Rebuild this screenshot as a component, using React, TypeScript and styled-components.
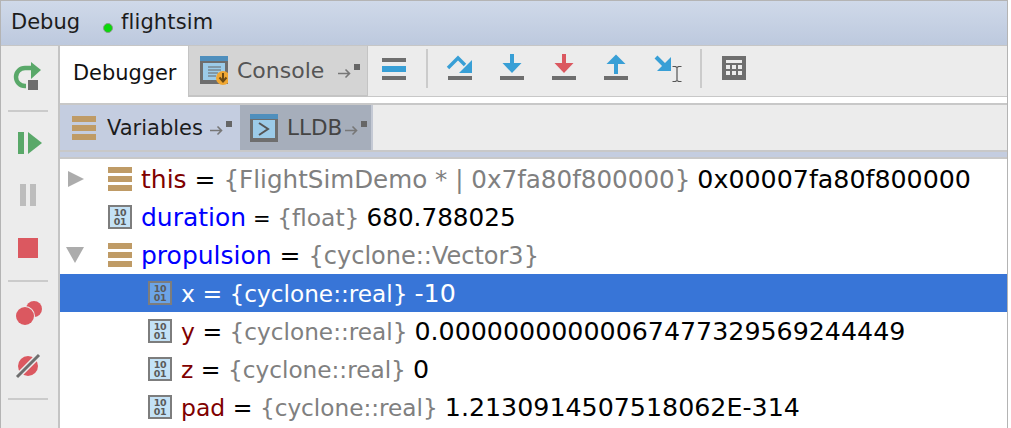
import React from "react";
import styled, { createGlobalStyle } from "styled-components";

const Global = createGlobalStyle`
  html, body { margin: 0; padding: 0; background: #fff; }
  body { font-family: "DejaVu Sans", "Open Sans", sans-serif; overflow: hidden; }
`;

const GRAY = "#6e6e6e";
const BLUE = "#389fd6";
const RED = "#db5860";
const GREEN = "#59a869";
const TAN = "#bf9b66";

const Frame = styled.div`
  width: 1008px;
  height: 428px;
  box-sizing: border-box;
  border: solid #b4b4b4;
  border-width: 1px 1px 0 1px;
  display: flex;
  flex-direction: column;
  overflow: hidden;
`;
const TitleBar = styled.div`
  height: 44px;
  flex: none;
  box-sizing: border-box;
  padding: 0 0 3px 10px;
  display: flex;
  align-items: center;
  background: linear-gradient(#cfd9e9, #bdc9de);
  font-size: 21px;
  color: #1c1c1c;
`;
const Title = styled.span`
  width: 85px;
`;
const Target = styled.span`
  letter-spacing: 0.12px;
`;
const RunDot = styled.span`
  width: 8px;
  height: 8px;
  border-radius: 50%;
  background: #0bd80b;
  border: 1px solid #8a9a8a;
  margin: 13px 8px 0 7px;
`;
const Body = styled.div`
  flex: 1;
  display: flex;
  min-height: 0;
  border-top: 1px solid #c6c6c6;
`;
const Sidebar = styled.div`
  width: 57px;
  flex: none;
  box-sizing: content-box;
  border-right: 2px solid #c4c4c4;
  background: #ececec;
  padding-top: 5px;
  display: flex;
  flex-direction: column;
`;
const SideButton = styled.svg`
  display: block;
  width: 57px;
  height: 52px;
  flex: none;
`;
const SideSep = styled.div<{ $top: number }>`
  height: 2px;
  flex: none;
  margin: ${(p) => p.$top}px 10px 5px 7px;
  background: #cbcbcb;
`;
const Main = styled.div`
  flex: 1;
  min-width: 0;
  display: flex;
  flex-direction: column;
`;
const TopRow = styled.div`
  height: 57px;
  flex: none;
  display: flex;
  align-items: flex-start;
  background: #fff;
  border-bottom: 2px solid #c8c8c8;
`;
const ActiveTab = styled.div`
  width: 126px;
  height: 57px;
  flex: none;
  box-sizing: border-box;
  padding: 0 0 4px 13px;
  display: flex;
  align-items: center;
  font-size: 20.9px;
  color: #111;
`;
const ConsoleTab = styled.div`
  margin-left: 2px;
  width: 179px;
  height: 51px;
  flex: none;
  box-sizing: border-box;
  border: solid #c4c4c4;
  border-width: 0 0 2px 1px;
  background: #d4d4d4;
  padding-left: 11px;
  display: flex;
  align-items: center;
  font-size: 22px;
  color: #555;
`;
const TabLabel = styled.span<{ $gap: number; $lead?: number }>`
  margin: 0 ${(p) => p.$gap}px 0 ${(p) => p.$lead ?? 9}px;
`;
const Toolbar = styled.div`
  flex: 1;
  height: 51px;
  box-sizing: border-box;
  background: #ececec;
  border-bottom: 1px solid #c8c8c8;
  border-left: 1px solid #c4c4c4;
  display: flex;
  align-items: flex-start;
`;
const ToolIcon = styled.svg`
  display: block;
  width: 52px;
  height: 50px;
  flex: none;
`;
const ToolSep = styled.div`
  width: 2px;
  height: 39px;
  flex: none;
  margin: 3px 6px 0;
  background: #cbcbcb;
`;
const SubRow = styled.div`
  height: 45px;
  flex: none;
  display: flex;
  background: #ececec;
  border-bottom: 2px solid #c8c8c8;
`;
const VarsTab = styled.div`
  width: 180px;
  flex: none;
  box-sizing: border-box;
  padding-left: 12px;
  background: #c4cde0;
  display: flex;
  align-items: center;
  font-size: 21px;
  color: #1c1c1c;
`;
const LldbTab = styled.div`
  width: 133px;
  flex: none;
  box-sizing: border-box;
  padding-left: 10px;
  background: #a6aebb;
  border-right: 2px solid #c4c9d4;
  display: flex;
  align-items: center;
  font-size: 21.5px;
  color: #444;
`;
const Strip = styled.div`
  height: 5px;
  flex: none;
  background: #c4cde0;
  border-bottom: 2px solid #c8c8c8;
`;
const Tree = styled.div`
  flex: 1;
  min-height: 0;
  padding-top: 1px;
  background: #fff;
`;
const Row = styled.div<{ $selected?: boolean }>`
  height: 38px;
  display: flex;
  align-items: center;
  white-space: nowrap;
  color: ${(p) => (p.$selected ? "#fff" : "#000")};
  background: ${(p) => (p.$selected ? "#3875d7" : "transparent")};
`;
const Twisty = styled.svg`
  width: 48px;
  height: 20px;
  flex: none;
`;
const Indent = styled.div`
  width: 88px;
  flex: none;
`;
const NameKind = styled.span<{ $kind: "member" | "local" | "selected"; $nested: boolean }>`
  font-size: ${(p) => (p.$nested ? 23.5 : 25)}px;
  color: ${(p) => (p.$kind === "member" ? "#7f0000" : p.$kind === "local" ? "#0000ff" : "#fff")};
`;
const Equals = styled.span<{ $size: number }>`
  font-size: ${(p) => p.$size}px;
`;
const TypeText = styled.span<{ $selected?: boolean; $size: number }>`
  font-size: ${(p) => p.$size}px;
  color: ${(p) => (p.$selected ? "#fff" : "#808080")};
`;
const ValueText = styled.span<{ $size: number }>`
  font-size: ${(p) => p.$size}px;
  margin-left: 7px;
`;
const Label = styled.span`
  margin-left: 9px;
`;
const BarsSvg = styled.svg`
  width: 24px;
  height: 24px;
  flex: none;
`;
const HexBox = styled.div<{ $selected?: boolean }>`
  width: 24px;
  height: 24px;
  flex: none;
  box-sizing: border-box;
  border: 2px solid #7d7d7d;
  background: ${(p) => (p.$selected ? "#6ca4e6" : "#c4e2f6")};
  color: #5a5a5a;
  font: bold 9.5px/8.5px "DejaVu Sans", sans-serif;
  letter-spacing: -0.3px;
  text-align: center;
  padding-top: 2px;
  overflow: hidden;
`;

const Bars = () => (
  <BarsSvg viewBox="0 0 24 24">
    <rect y="0" width="24" height="6" fill={TAN} />
    <rect y="9" width="24" height="6" fill={TAN} />
    <rect y="18" width="24" height="6" fill={TAN} />
  </BarsSvg>
);
const Hex = ({ selected }: { selected?: boolean }) => (
  <HexBox $selected={selected}>
    10
    <br />
    01
  </HexBox>
);
const Pin = () => (
  <svg width="23" height="16" viewBox="0 0 23 16" style={{ flex: "none" }}>
    <path d="M0 10.5h11M7.5 6.5l4 4-4 4" fill="none" stroke="#777" strokeWidth="1.6" />
    <rect x="16" y="1" width="6" height="6" fill="#666" />
  </svg>
);

const Sep = ToolSep;

function TreeRow(props: {
  depth: 0 | 1;
  twisty?: "closed" | "open";
  icon: "bars" | "hex";
  name: string;
  kind: "member" | "local";
  type: string;
  value?: string;
  selected?: boolean;
  eqSize?: number;
  typeSize?: number;
  valueSize?: number;
}) {
  const { depth, twisty, icon, name, kind, type, value, selected, eqSize = 23.5, typeSize = 23.2, valueSize = 25.3 } = props;
  return (
    <Row $selected={selected}>
      {depth === 1 ? (
        <Indent />
      ) : (
        <Twisty viewBox="0 0 48 20">
          {twisty === "closed" && <polygon points="8,2 24,10 8,18" fill="#acacac" />}
          {twisty === "open" && <polygon points="6,2 24,2 15,18" fill="#acacac" />}
        </Twisty>
      )}
      {icon === "bars" ? <Bars /> : <Hex selected={selected} />}
      <Label>
        <NameKind $kind={selected ? "selected" : kind} $nested={depth === 1}>
          {name}
        </NameKind>
        <Equals $size={eqSize}> = </Equals>
        <TypeText $selected={selected} $size={typeSize}>
          {type}
        </TypeText>
        {value ? <ValueText $size={valueSize}>{value}</ValueText> : null}
      </Label>
    </Row>
  );
}

export default function App() {
  return (
    <Frame>
      <Global />
      <TitleBar>
        <Title>Debug</Title>
        <RunDot />
        <Target>flightsim</Target>
      </TitleBar>
      <Body>
        <Sidebar>
          <SideButton viewBox="1 51 57 52">
            <path d="M32 68h-7a9 9 0 0 0-9 9 9 9 0 0 0 9 9h1" fill="none" stroke={GREEN} strokeWidth="4.4" />
            <polygon points="31,62 41,70 31,79" fill={GREEN} />
            <rect x="28" y="80" width="10" height="10" fill={GRAY} />
          </SideButton>
          <SideSep $top={7} />
          <SideButton viewBox="1 117 57 52">
            <rect x="18" y="132" width="6" height="22" fill={GREEN} />
            <polygon points="28,132 42,143 28,154" fill={GREEN} />
          </SideButton>
          <SideButton viewBox="1 169 57 52">
            <rect x="20" y="184" width="6" height="22" fill="#bdbdbd" />
            <rect x="30" y="184" width="6" height="22" fill="#bdbdbd" />
          </SideButton>
          <SideButton viewBox="1 221 57 52">
            <rect x="18" y="238" width="20" height="20" fill={RED} />
          </SideButton>
          <SideSep $top={7} />
          <SideButton viewBox="1 287 57 52">
            <circle cx="34" cy="309" r="8" fill={RED} />
            <circle cx="25" cy="316" r="10" fill="#ececec" />
            <circle cx="25" cy="316" r="9" fill={RED} />
          </SideButton>
          <SideButton viewBox="1 339 57 52">
            <circle cx="28" cy="366" r="10" fill={RED} />
            <path d="M17 377L39 355" stroke="#ececec" strokeWidth="6" />
            <path d="M17 377L39 355" stroke={GRAY} strokeWidth="3" />
          </SideButton>
          <SideSep $top={7} />
        </Sidebar>
        <Main>
          <TopRow>
            <ActiveTab>Debugger</ActiveTab>
            <ConsoleTab>
              <svg width="28" height="30" viewBox="200 56 28 30" style={{ flex: "none" }}>
                <rect x="200" y="56" width="28" height="28" fill={GRAY} />
                <rect x="200" y="56" width="28" height="5" fill="#4f8fbd" />
                <rect x="203" y="63" width="22" height="17" fill="#9ccbe8" />
                <path d="M208 67h13M208 70h13M208 73h10M208 76h8" stroke="#666" strokeWidth="1" />
                <circle cx="223" cy="78" r="7" fill="#f0a732" />
                <path d="M223 73v8M219.5 77.5l3.5 4 3.5-4" fill="none" stroke="#6b4a14" strokeWidth="2" />
              </svg>
              <TabLabel $gap={14}>Console</TabLabel>
              <Pin />
            </ConsoleTab>
            <Toolbar>
              <ToolIcon viewBox="368 46 52 50">
                <rect x="382" y="58" width="24" height="4" fill={GRAY} />
                <rect x="382" y="66" width="24" height="6" fill={BLUE} />
                <rect x="382" y="76" width="24" height="4" fill={GRAY} />
              </ToolIcon>
              <Sep />
              <ToolIcon viewBox="434 46 52 50">
                <path d="M448 68l10-10 7 7" fill="none" stroke={BLUE} strokeWidth="3.4" />
                <polygon points="472,60 472,73 459,73" fill={BLUE} />
                <rect x="448" y="76" width="24" height="4" fill={GRAY} />
              </ToolIcon>
              <ToolIcon viewBox="486 46 52 50">
                <rect x="510" y="54" width="4" height="10" fill={BLUE} />
                <polygon points="502.5,63 521.5,63 512,73" fill={BLUE} />
                <rect x="500" y="76" width="24" height="4" fill={GRAY} />
              </ToolIcon>
              <ToolIcon viewBox="538 46 52 50">
                <rect x="562" y="54" width="4" height="10" fill={RED} />
                <polygon points="554.5,63 573.5,63 564,73" fill={RED} />
                <rect x="552" y="76" width="24" height="4" fill={GRAY} />
              </ToolIcon>
              <ToolIcon viewBox="590 46 52 50">
                <polygon points="606.5,64 625.5,64 616,54.5" fill={BLUE} />
                <rect x="614" y="64" width="4" height="10" fill={BLUE} />
                <rect x="604" y="76" width="24" height="4" fill={GRAY} />
              </ToolIcon>
              <ToolIcon viewBox="642 46 52 50">
                <path d="M656 57l10 10" stroke={BLUE} strokeWidth="4" />
                <polygon points="671,57 671,71 657,71" fill={BLUE} />
                <path d="M672.5 66.5h3l1.5 1 1.5-1h3M677 67.5v13M672.5 81.5h3l1.5-1 1.5 1h3" fill="none" stroke="#555" strokeWidth="1.2" />
              </ToolIcon>
              <Sep />
              <ToolIcon viewBox="708 46 52 50">
                <rect x="722" y="56" width="24" height="24" fill={GRAY} />
                <rect x="726" y="60" width="16" height="3" fill="#ececec" />
                {[726, 732, 738].map((x) =>
                  [65, 71].map((y) => <rect key={`${x}-${y}`} x={x} y={y} width="4" height="4" fill="#ececec" />)
                )}
              </ToolIcon>
            </Toolbar>
          </TopRow>
          <SubRow>
            <VarsTab>
              <Bars />
              <TabLabel $gap={7} $lead={11}>Variables</TabLabel>
              <Pin />
            </VarsTab>
            <LldbTab>
              <svg width="28" height="28" viewBox="250 114 28 28" style={{ flex: "none" }}>
                <rect x="250" y="114" width="28" height="28" fill={GRAY} />
                <rect x="250" y="114" width="28" height="5" fill="#4f8fbd" />
                <rect x="253" y="120" width="22" height="18" fill="#9ccbe8" />
                <path d="M259 123l9 6-9 6" fill="none" stroke="#555" strokeWidth="2" />
              </svg>
              <TabLabel $gap={3}>LLDB</TabLabel>
              <Pin />
            </LldbTab>
          </SubRow>
          <Strip />
          <Tree>
            <TreeRow depth={0} twisty="closed" icon="bars" name="this" kind="member" type="{FlightSimDemo * | 0x7fa80f800000}" value="0x00007fa80f800000" eqSize={25} typeSize={24.6} />
            <TreeRow depth={0} icon="hex" name="duration" kind="local" type="{float}" value="680.788025" eqSize={21} typeSize={23.4} valueSize={24.7} />
            <TreeRow depth={0} twisty="open" icon="bars" name="propulsion" kind="local" type="{cyclone::Vector3}" eqSize={25} typeSize={24} />
            <TreeRow depth={1} icon="hex" name="x" kind="member" type="{cyclone::real}" value="-10" selected />
            <TreeRow depth={1} icon="hex" name="y" kind="member" type="{cyclone::real}" value="0.00000000000067477329569244449" />
            <TreeRow depth={1} icon="hex" name="z" kind="member" type="{cyclone::real}" value="0" />
            <TreeRow depth={1} icon="hex" name="pad" kind="member" type="{cyclone::real}" value="1.2130914507518062E-314" />
          </Tree>
        </Main>
      </Body>
    </Frame>
  );
}
